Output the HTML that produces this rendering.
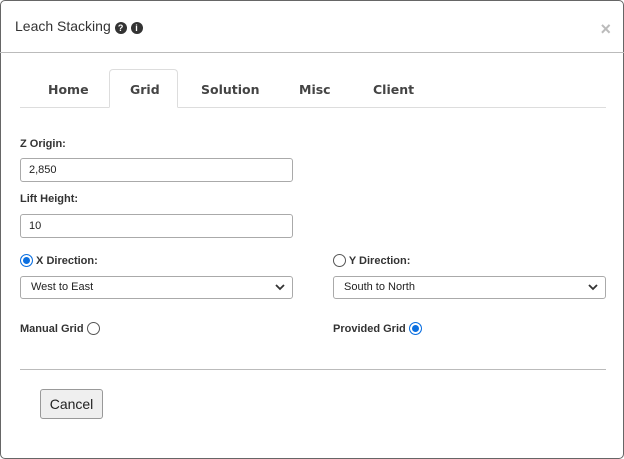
<!DOCTYPE html>
<html><head><style>
*{box-sizing:border-box;margin:0;padding:0}
body{width:624px;height:459px;background:#fff;font-family:"Liberation Sans",sans-serif;color:#333;position:relative;overflow:hidden}
.frame{position:absolute;left:0;top:0;width:624px;height:459px;border:1px solid #666;border-radius:5px}
.abs{position:absolute}
.title{left:15px;top:18px;font-size:14px;color:#333}
.ic{display:inline-block;width:12px;height:12px;border-radius:50%;background:#333;color:#fff;font-size:9px;font-weight:bold;text-align:center;line-height:12px;vertical-align:0px}
.x{right:13px;top:19px;font-size:18px;color:#bbb;font-weight:bold}
.hl{left:0;width:624px;top:52px;height:1px;background:#bbb}
.tabline{left:20px;width:586px;top:107px;height:1px;background:#ddd}
.tab{top:82px;font-size:12.5px;font-weight:bold;color:#444;font-family:"DejaVu Sans",sans-serif}
.gridtab{left:109px;top:69px;width:69px;height:39px;border:1px solid #ddd;border-bottom:1px solid #fff;border-radius:4px 4px 0 0;background:#fff}
.lbl{font-size:11px;font-weight:bold;color:#333}
.inp{border:1px solid #aaa;border-radius:3px;height:24px;font-size:11px;padding-left:8px;line-height:22px;color:#222}
.sel{border:1px solid #aaa;border-radius:3px;height:23px;font-size:11px;padding-left:10px;line-height:21px;color:#222}
.sel svg{position:absolute;right:7px;top:7px}
.radio{display:inline-block;width:13px;height:13px;border:1px solid #555;border-radius:50%;vertical-align:-3px;background:#fff}
.radio.on{border:1.5px solid #0b6fe0;box-shadow:inset 0 0 0 2px #fff;background:#0b6fe0}
.btn{left:40px;top:389px;width:63px;height:30px;border:1px solid #999;border-radius:3px;background:#efefef;font-size:14px;text-align:center;line-height:28px;color:#222}
</style></head><body>
<div class="frame"></div>
<div class="abs title">Leach Stacking <span class="ic">?</span> <span class="ic">i</span></div>
<div class="abs x">×</div>
<div class="abs hl"></div>
<div class="abs tabline"></div>
<div class="abs gridtab"></div>
<div class="abs tab" style="left:48px">Home</div>
<div class="abs tab" style="left:130px">Grid</div>
<div class="abs tab" style="left:201px">Solution</div>
<div class="abs tab" style="left:299px">Misc</div>
<div class="abs tab" style="left:373px">Client</div>

<div class="abs lbl" style="left:20px;top:138px">Z Origin:</div>
<div class="abs inp" style="left:20px;top:158px;width:273px">2,850</div>
<div class="abs lbl" style="left:20px;top:193px">Lift Height:</div>
<div class="abs inp" style="left:20px;top:214px;width:273px">10</div>

<div class="abs lbl" style="left:20px;top:254px"><span class="radio on"></span> X Direction:</div>
<div class="abs sel" style="left:20px;top:276px;width:273px">West to East<svg width="10" height="7" viewBox="0 0 10 7"><path d="M1 1L5 5L9 1" fill="none" stroke="#333" stroke-width="1.8"/></svg></div>
<div class="abs lbl" style="left:333px;top:254px"><span class="radio"></span> Y Direction:</div>
<div class="abs sel" style="left:333px;top:276px;width:273px">South to North<svg width="10" height="7" viewBox="0 0 10 7"><path d="M1 1L5 5L9 1" fill="none" stroke="#333" stroke-width="1.8"/></svg></div>

<div class="abs lbl" style="left:20px;top:322px">Manual Grid <span class="radio"></span></div>
<div class="abs lbl" style="left:333px;top:322px">Provided Grid <span class="radio on"></span></div>

<div class="abs" style="left:20px;top:369px;width:586px;height:1px;background:#bbb"></div>
<div class="abs btn">Cancel</div>
</body></html>
